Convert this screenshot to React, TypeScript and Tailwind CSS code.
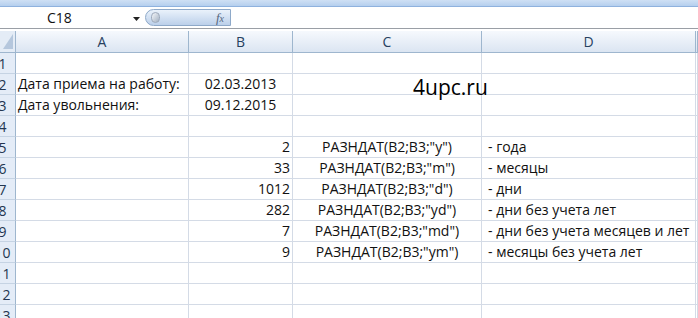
import React from "react";

const FONT = { fontFamily: '"Open Sans", "Noto Sans", Arial, sans-serif' };

type Row = { a?: string; b?: string; bAlign?: "center" | "right"; c?: string; d?: string };

const ROWS: Row[] = [
  {},
  { a: "Дата приема на работу:", b: "02.03.2013", bAlign: "center" },
  { a: "Дата увольнения:", b: "09.12.2015", bAlign: "center" },
  {},
  { b: "2", bAlign: "right", c: 'РАЗНДАТ(B2;B3;"y")', d: "- года" },
  { b: "33", bAlign: "right", c: 'РАЗНДАТ(B2;B3;"m")', d: "- месяцы" },
  { b: "1012", bAlign: "right", c: 'РАЗНДАТ(B2;B3;"d")', d: "- дни" },
  { b: "282", bAlign: "right", c: 'РАЗНДАТ(B2;B3;"yd")', d: "- дни без учета лет" },
  { b: "7", bAlign: "right", c: 'РАЗНДАТ(B2;B3;"md")', d: "- дни без учета месяцев и лет" },
  { b: "9", bAlign: "right", c: 'РАЗНДАТ(B2;B3;"ym")', d: "- месяцы без учета лет" },
  {},
  {},
  {},
];

const COLS = "grid-cols-[26px_173px_104px_189px_214px_1fr]";

function Cell({ children, className = "" }: { children?: React.ReactNode; className?: string }) {
  return (
    <div
      className={`h-[21px] border-r border-b border-[#d4dbe6] text-[14px] leading-[20px] text-[#111] whitespace-nowrap ${className}`}
    >
      {children}
    </div>
  );
}

export default function App() {
  return (
    <div className="relative h-[318px] w-[698px] overflow-hidden bg-white" style={FONT}>
      {/* ribbon bottom edge */}
      <div className="h-[7px] border-b border-[#8fb2de] bg-gradient-to-b from-[#cfe0f4] to-[#b5cfee]" />

      {/* formula bar */}
      <div className="flex h-[22px] items-stretch border-b border-[#9a9fa6] bg-white">
        <div className="relative flex w-[145px] items-center">
          <span className="ml-[47px] text-[14px] text-[#111]">C18</span>
          <svg className="absolute left-[133px] top-[10px]" width="7" height="4" viewBox="0 0 7 4">
            <path d="M0 0H7L3.5 4Z" fill="#222" />
          </svg>
        </div>
        <div className="my-[2px] flex w-[86px] items-center rounded-l-full border border-[#8ea9c9] bg-gradient-to-b from-[#eaf2fb] to-[#bcd0ea] pl-[5px] pr-[6px]">
          <div className="h-[11px] w-[9px] rounded-full border border-[#9eaabb] bg-gradient-to-br from-[#f5f7fa] to-[#a3b1c2]" />
          <span
            className="ml-auto text-[13px] italic text-[#55677e]"
            style={{ fontFamily: '"Liberation Serif", "DejaVu Serif", serif' }}
          >
            f<span className="text-[10px]">x</span>
          </span>
        </div>
        <div className="flex-1 bg-white" />
      </div>

      {/* sheet */}
      <div className="mt-[2px] -ml-[10px]">
        {/* column headers */}
        <div className={`grid ${COLS}`}>
          <div className="relative h-[22px] border-r border-b border-[#9eb6ce] bg-[#e4ecf6]">
            <svg className="absolute left-[13px] top-[3px]" width="10" height="15" viewBox="0 0 10 15">
              <path d="M10 0V15H0Z" fill="#b5c7dd" />
            </svg>
          </div>
          {["A", "B", "C", "D", ""].map((l, i) => (
            <div
              key={i}
              className="flex h-[22px] items-center justify-center border-r border-b border-[#9eb6ce] bg-gradient-to-b from-[#f6f9fd] to-[#dbe5f2] text-[14px] text-[#27415f]"
            >
              {l}
            </div>
          ))}
        </div>

        {/* rows */}
        {ROWS.map((r, i) => (
          <div key={i} className={`grid ${COLS}`}>
            <div className="flex h-[21px] items-center justify-center border-r border-b border-r-[#9eb6ce] border-b-[#c5d3e3] bg-[#e4ecf7] text-[14px] text-[#233650]">
              {i + 1}
            </div>
            <Cell className="pl-[2px]">{r.a}</Cell>
            <Cell className={r.bAlign === "right" ? "pr-[2px] text-right" : "text-center"}>{r.b}</Cell>
            <Cell className="text-center">{r.c}</Cell>
            <Cell className="pl-[6px] overflow-visible">{r.d}</Cell>
            <Cell />
          </div>
        ))}
      </div>

      {/* watermark */}
      <div className="absolute left-[413px] top-[77px] text-[21px] leading-[20px] text-black">4upc.ru</div>
    </div>
  );
}
